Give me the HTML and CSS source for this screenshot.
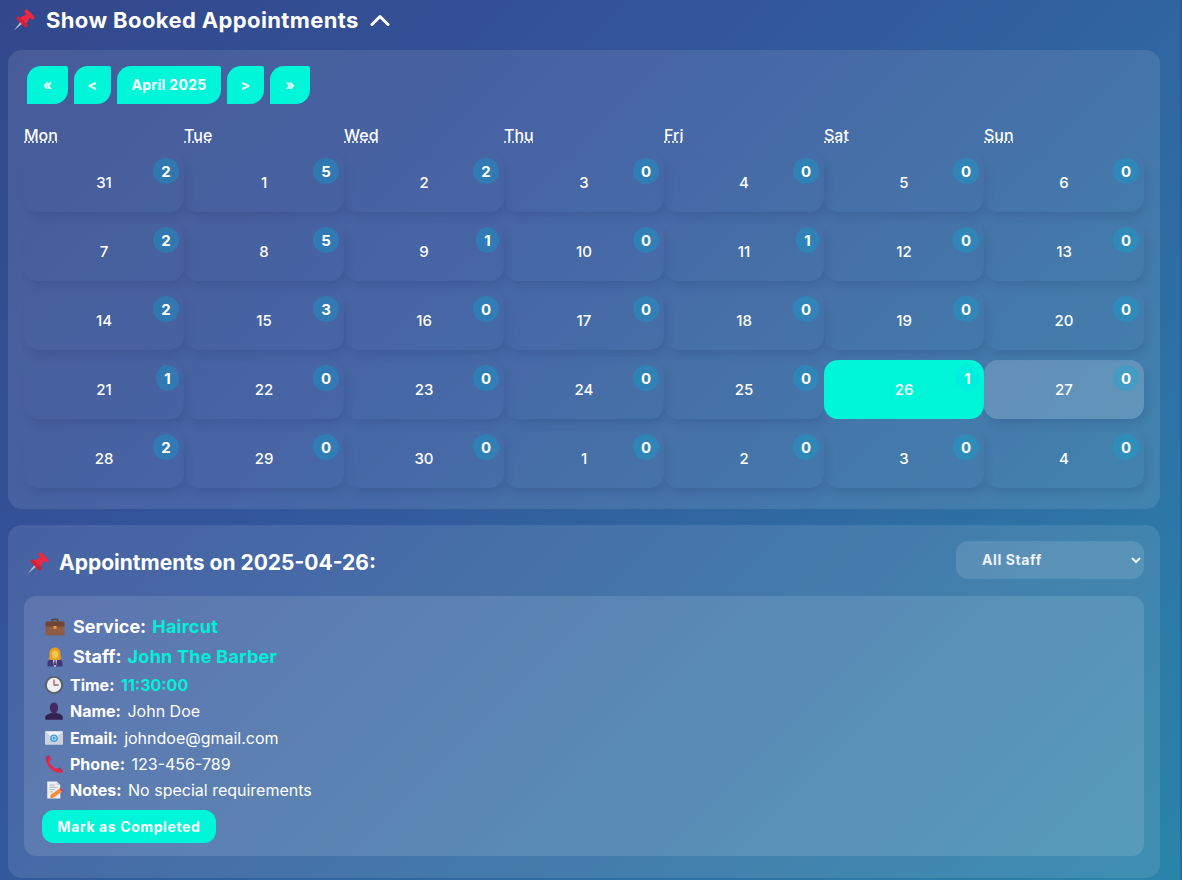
FILE: index.html
```html
<!DOCTYPE html>
<html lang="en">
<head>
<meta charset="utf-8">
<title>Booked Appointments</title>
<link rel="stylesheet" href="styles.css">
</head>
<body>
<svg class="defs" width="0" height="0" aria-hidden="true">
  <defs>
    <symbol id="i-pin" viewBox="0 0 24 24">
      <path d="M1 23.5 8.6 13.2l2.2 2.2z" fill="#b4bec6"/>
      <path d="M5.6 10.8 18.2 4.6 19.4 5.8 13.2 18.4z" fill="#f0283f"/>
      <path d="M12.6 2.2c.9-.9 2-.9 2.8 0l6.4 6.4c.8.8.8 1.9 0 2.8-.9.8-2 .8-2.8 0l-6.4-6.4c-.8-.9-.8-2 0-2.8z" fill="#f0283f"/>
      <path d="M4.4 9.3c.9-.8 1.900-.8 2.700 0l7.600 7.600c.8.800.8 1.800 0 2.700-.8.800-1.900.800-2.700 0L4.400 12c-.8-.8-.8-1.900 0-2.700z" fill="#d41f38"/>
    </symbol>
    <symbol id="i-case" viewBox="0 0 20 20">
      <path d="M6.500 5V3C6.500 2.200 7 1.700 7.800 1.700h4.400c.8 0 1.300.5 1.300 1.300v2h-1.500V3.200h-4.000V5z" fill="#5a4034"/>
      <rect x="0.500" y="4.500" width="19" height="14" rx="1.500" fill="#8f5c46"/>
      <rect x="0.500" y="4.500" width="19" height="5" rx="1.500" fill="#6e4636"/>
      <rect x="8.500" y="9" width="3" height="2.800" fill="#e8a02c"/>
    </symbol>
    <symbol id="i-staff" viewBox="0 0 20 20">
      <path d="M2.500 19.500v-3.700C2.500 13.200 5 12 10 12s7.500 1.200 7.500 3.800v3.700z" fill="#43367a"/>
      <path d="M8 12h4l-1 7.500H9z" fill="#eef1f5"/>
      <path d="M9.500 13h1l.4 4.500-.9 1.500-.9-1.500z" fill="#2b2352"/>
      <path d="M3.500 12C4.500 10 4.500 9 4.500 7 4.500 3 6.500.5 10 .5s5.500 2.500 5.500 6.500c0 2 0 3 1 5-1.500 1-3 1.200-4.500 1H8c-1.500.2-3 0-4.500-1z" fill="#e79e1c"/>
      <ellipse cx="10" cy="7.500" rx="3.300" ry="4" fill="#f8c550"/>
    </symbol>
    <symbol id="i-clock" viewBox="0 0 20 20">
      <circle cx="10" cy="10" r="10" fill="#5b5e62"/>
      <circle cx="10" cy="10" r="8" fill="#eef0f2"/>
      <path d="M10 10H15.300" fill="none" stroke="#55585c" stroke-width="1.300"/>
      <path d="M10 4V10.500" fill="none" stroke="#d8324b" stroke-width="1.300"/>
    </symbol>
    <symbol id="i-person" viewBox="0 0 20 20">
      <path d="M5.500 6.500C5.500 3 7.200.5 10 .5s4.500 2.500 4.500 6c0 2-.7 3.600-1.800 4.700v1.300c2.800.5 6.300 1.500 6.800 4.300v2.700H.5v-2.700c.5-2.800 4-3.800 6.800-4.300v-1.300C6.200 10.100 5.500 8.500 5.500 6.500z" fill="#43295f"/>
      <path d="M.5 19.500v-2.700c.5-2.800 4-3.800 6.800-4.300 1 1.200 4.400 1.200 5.400 0 2.800.5 6.300 1.500 6.800 4.300v2.700z" fill="#33214f"/>
    </symbol>
    <symbol id="i-mail" viewBox="0 0 20 20">
      <rect x="0" y="2.500" width="20" height="15" rx="0.800" fill="#ccd3de"/>
      <path d="M.3 2.800 10 11l9.700-8.200z" fill="#f0f3f7"/>
      <circle cx="10" cy="10.200" r="4.200" fill="#3aa0e6"/>
      <circle cx="10" cy="10.200" r="2.200" fill="none" stroke="#dff1fc" stroke-width="0.900"/>
    </symbol>
    <symbol id="i-phone" viewBox="0 0 20 20">
      <path d="M.8 3C.8 1.300 2.800.2 4.600.5l2.300 4.300c-.5 1.200-1.500 1.700-2.300 2.200 1.100 3.800 4.500 7.500 8.800 8.600.7-.9 1.500-1.600 2.900-1.700l3.500 3.200c.3 1.500-1 2.900-2.700 2.900C7.800 19.500.6 11.200.8 3z" fill="#ea2548"/>
      <path d="M.8 3C.8 1.300 2.800.2 4.600.5l.9 1.700C4 2.800 3.300 3.700 3.700 5.700L2.800 8C1.500 6.200.7 4.800.8 3z" fill="#a6326e"/>
      <path d="M16.300 14.300l3.500 3.200c.1.700-.1 1.300-.5 1.800l-4.600-4.200c.4-.4.900-.7 1.600-.8z" fill="#a6326e"/>
    </symbol>
    <symbol id="i-memo" viewBox="0 0 20 20">
      <path d="M2.500.5h10.500l4 4v15H2.500z" fill="#eef0f3"/>
      <path d="M13 .5l4 4h-4z" fill="#c6cbd2"/>
      <path d="M5 4.500h6M5 7h9M5 9.500h6M5 12h4" stroke="#a4acb6" stroke-width="0.900"/>
      <path d="M6 15.500 16 8.500l3 3.500L9 18.500l-3.300.8z" fill="#f58b3c"/>
      <path d="M16 8.500l1.500-1 3 3.500-1.500 1z" fill="#e8345a"/>
    </symbol>
  </defs>
</svg>

<main class="page">
  <h2 class="toggle">
    <svg class="emoji emoji-head"><use href="#i-pin"/></svg>
    <span class="toggle-text">Show Booked Appointments</span>
    <svg class="chevron" viewBox="0 0 20 12"><path d="M2 10.500 10 2.500l8 8" fill="none" stroke="#fff" stroke-width="3" stroke-linecap="round" stroke-linejoin="round"/></svg>
  </h2>

  <section class="panel calendar">
    <nav class="nav">
      <button class="nav-btn w41">«</button>
      <button class="nav-btn w37">&lt;</button>
      <button class="nav-btn w104">April 2025</button>
      <button class="nav-btn w37">&gt;</button>
      <button class="nav-btn w40">»</button>
    </nav>
    <div class="weekdays">
      <abbr>Mon</abbr><abbr>Tue</abbr><abbr>Wed</abbr><abbr>Thu</abbr><abbr>Fri</abbr><abbr>Sat</abbr><abbr>Sun</abbr>
    </div>
    <div class="days">
      <div class="day">31<b class="badge">2</b></div>
      <div class="day">1<b class="badge">5</b></div>
      <div class="day">2<b class="badge">2</b></div>
      <div class="day">3<b class="badge">0</b></div>
      <div class="day">4<b class="badge">0</b></div>
      <div class="day">5<b class="badge">0</b></div>
      <div class="day">6<b class="badge">0</b></div>
      <div class="day">7<b class="badge">2</b></div>
      <div class="day">8<b class="badge">5</b></div>
      <div class="day">9<b class="badge one">1</b></div>
      <div class="day">10<b class="badge">0</b></div>
      <div class="day">11<b class="badge one">1</b></div>
      <div class="day">12<b class="badge">0</b></div>
      <div class="day">13<b class="badge">0</b></div>
      <div class="day">14<b class="badge">2</b></div>
      <div class="day">15<b class="badge">3</b></div>
      <div class="day">16<b class="badge">0</b></div>
      <div class="day">17<b class="badge">0</b></div>
      <div class="day">18<b class="badge">0</b></div>
      <div class="day">19<b class="badge">0</b></div>
      <div class="day">20<b class="badge">0</b></div>
      <div class="day">21<b class="badge one">1</b></div>
      <div class="day">22<b class="badge">0</b></div>
      <div class="day">23<b class="badge">0</b></div>
      <div class="day">24<b class="badge">0</b></div>
      <div class="day">25<b class="badge">0</b></div>
      <div class="day selected">26<b class="badge one">1</b></div>
      <div class="day today">27<b class="badge">0</b></div>
      <div class="day">28<b class="badge">2</b></div>
      <div class="day">29<b class="badge">0</b></div>
      <div class="day">30<b class="badge">0</b></div>
      <div class="day">1<b class="badge">0</b></div>
      <div class="day">2<b class="badge">0</b></div>
      <div class="day">3<b class="badge">0</b></div>
      <div class="day">4<b class="badge">0</b></div>
    </div>
  </section>

  <section class="panel details">
    <header class="details-head">
      <h3 class="details-title"><svg class="emoji emoji-title"><use href="#i-pin"/></svg><span>Appointments on 2025-04-26:</span></h3>
      <select class="staff-select"><option>All Staff</option></select>
    </header>
    <article class="card">
      <p class="line big"><svg class="emoji emoji-big"><use href="#i-case"/></svg><strong>Service:</strong> <em>Haircut</em></p>
      <p class="line big"><svg class="emoji emoji-big"><use href="#i-staff"/></svg><strong>Staff:</strong> <em>John The Barber</em></p>
      <p class="line"><svg class="emoji"><use href="#i-clock"/></svg><strong>Time:</strong> <em>11:30:00</em></p>
      <p class="line"><svg class="emoji"><use href="#i-person"/></svg><strong>Name:</strong> John Doe</p>
      <p class="line"><svg class="emoji"><use href="#i-mail"/></svg><strong>Email:</strong> johndoe@gmail.com</p>
      <p class="line"><svg class="emoji"><use href="#i-phone"/></svg><strong>Phone:</strong> 123-456-789</p>
      <p class="line"><svg class="emoji"><use href="#i-memo"/></svg><strong>Notes:</strong> No special requirements</p>
      <button class="complete">Mark as Completed</button>
    </article>
  </section>
</main>
</body>
</html>
```
FILE: styles.css
```css
* { box-sizing: border-box; }
html { height: 880px; overflow: hidden; background: linear-gradient(180deg, #2a5c98, #1f719f); }
body {
  margin: 0;
  width: 1180px;
  height: 880px;
  overflow: hidden;
  font-family: "Inter", "Liberation Sans", sans-serif;
  color: #fff;
  background: linear-gradient(135deg, #33488c 0%, #33549b 35%, #2a84aa 100%);
}
.defs { position: absolute; }
.page { padding: 0 20px 0 8px; }
h2, h3, p { margin: 0; }
.toggle {
  height: 50px;
  padding: 0 0 11px 5px;
  display: flex;
  align-items: center;
  gap: 10px;
  font-size: 22px;
  font-weight: 700;
}
.toggle-text { letter-spacing: .38px; }
.emoji { width: 18px; height: 18px; flex: none; margin-right: 7px; vertical-align: -3px; }
.emoji-head { width: 23px; height: 23px; margin-right: 0; }
.chevron { width: 20px; height: 12px; margin-left: 1px; }
.panel { background: rgba(255,255,255,.1); border-radius: 14px; padding: 16px; }
.calendar { height: 459px; margin-bottom: 16px; }
.nav { display: flex; gap: 6px; padding-left: 3px; height: 38px; margin-bottom: 22px; }
.nav-btn {
  height: 38px;
  border: 0;
  padding: 0 0 2px;
  background: #00f6d8;
  color: #fff;
  font: 700 14px "Inter", "Liberation Sans", sans-serif;
  letter-spacing: .3px;
  border-radius: 14px 2px 14px 0;
}
.w41 { width: 41px; }
.w37 { width: 37px; }
.w104 { width: 104px; }
.w40 { width: 40px; }
.weekdays { display: grid; grid-template-columns: repeat(7, 160px); height: 27px; font-size: 16px; font-weight: 500; line-height: 19px; }
.weekdays abbr { justify-self: start; height: 19px; text-decoration: underline dotted; text-underline-offset: 1px; }
.days { display: grid; grid-template-columns: repeat(7, 160px); grid-auto-rows: 59px; row-gap: 10px; }
.day {
  position: relative;
  display: flex;
  align-items: center;
  justify-content: center;
  border-radius: 14px;
  font-size: 15px;
  font-weight: 500;
  box-shadow: 3px 6px 10px -2px rgba(20,40,90,.16);
}
.selected { background: #00f6d8; box-shadow: none; }
.today { background: rgba(255,255,255,.17); }
.badge {
  position: absolute;
  top: 5px;
  right: 5px;
  width: 26px;
  height: 26px;
  border-radius: 50%;
  display: flex;
  align-items: center;
  justify-content: center;
  background: rgba(0,175,220,.3);
  font-size: 15px;
  font-weight: 700;
}
.one { width: 23px; }
.selected .badge { background: rgba(0,230,225,.5); }
.details { height: 353px; }
.details-head { display: flex; align-items: center; justify-content: space-between; height: 38px; margin-bottom: 17px; }
.details-title { display: flex; align-items: center; gap: 9px; padding: 4px 0 0 3px; font-size: 21px; font-weight: 700; }
.emoji-title { width: 23px; height: 23px; margin-right: 0; }
.staff-select {
  width: 188px;
  height: 38px;
  padding: 0 0 2px 22px;
  border: 0;
  border-radius: 12px;
  background: rgba(255,255,255,.12);
  color: #eef3fa;
  font: 700 14px "Inter", "Liberation Sans", sans-serif;
  letter-spacing: .6px;
}
.card { height: 260px; padding: 16px 18px 0 21px; background: rgba(255,255,255,.12); border-radius: 12px; }
.line { height: 26.300px; line-height: 26px; font-size: 16px; }
.line strong { font-weight: 700; margin-right: 2px; }
.line em { font-style: normal; font-weight: 700; color: #00f0d8; }
.big { height: 30px; line-height: 30px; font-size: 18px; }
.big strong { margin-right: 1px; }
.big em { letter-spacing: .25px; }
.emoji-big { width: 20px; height: 20px; margin-right: 8px; vertical-align: -4px; }
.complete {
  display: block;
  margin: 7px 0 0 -3px;
  width: 174px;
  height: 33px;
  border: 0;
  border-radius: 12px;
  background: #00f6d8;
  color: #fff;
  font: 700 14px "Inter", "Liberation Sans", sans-serif;
  letter-spacing: .6px;
}
```
